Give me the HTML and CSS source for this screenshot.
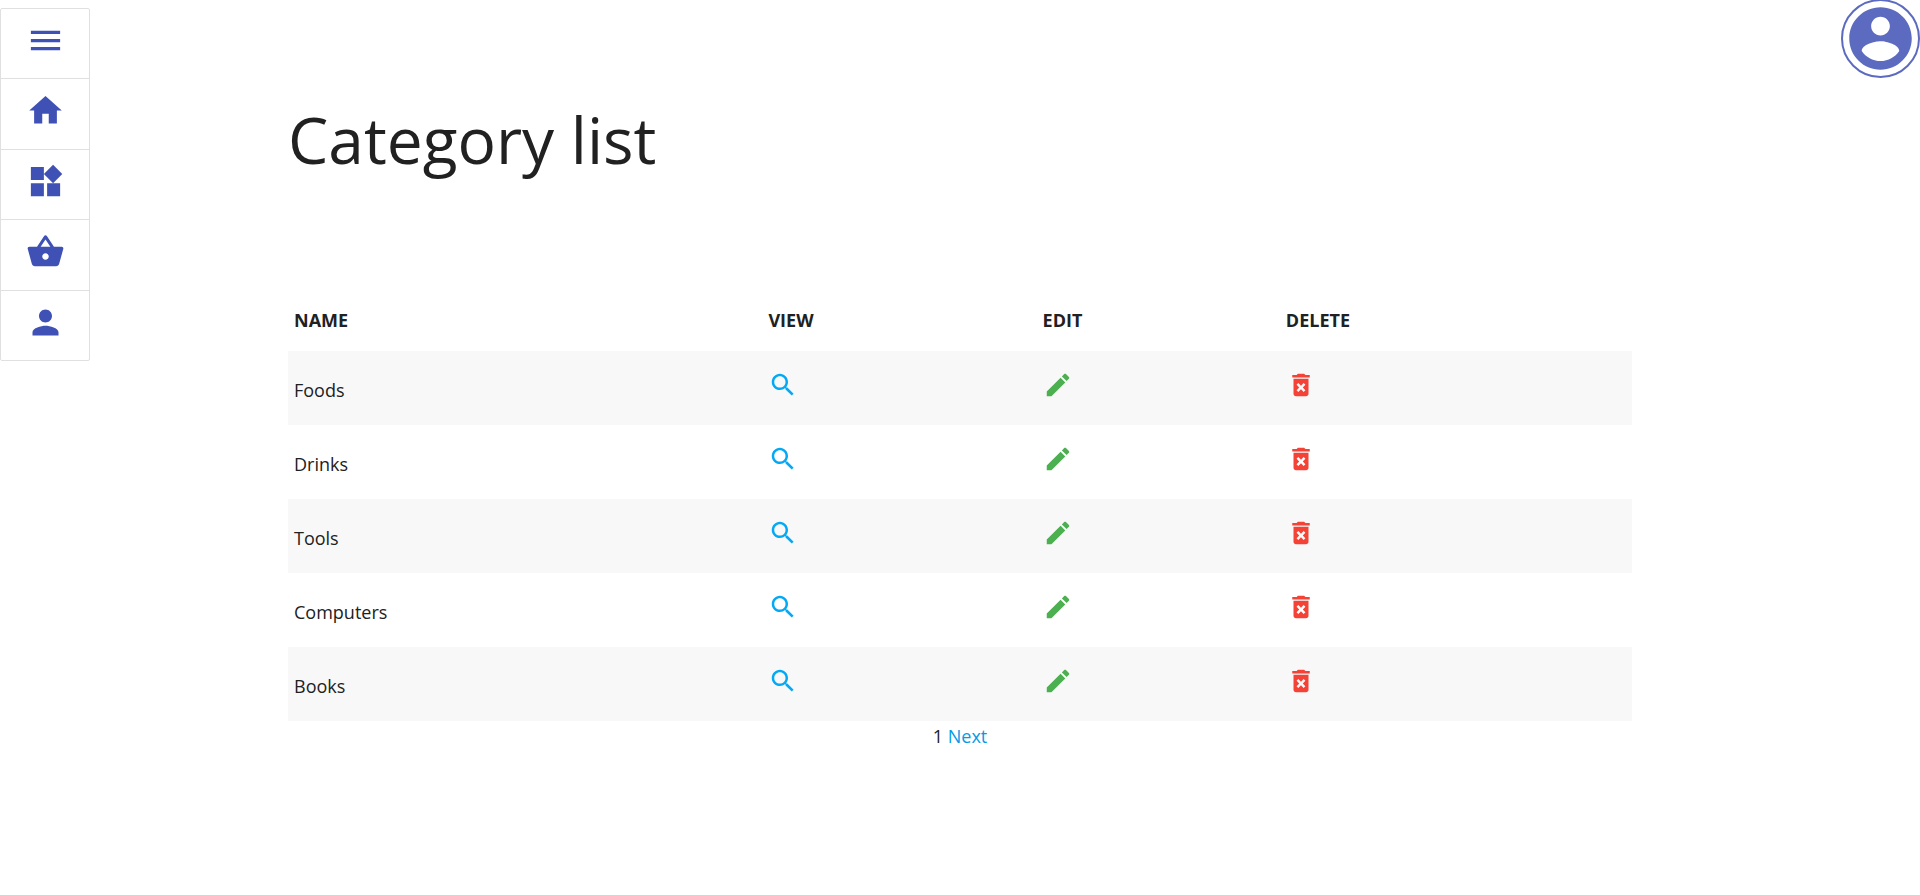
FILE: index.html
```html
<!DOCTYPE html>
<html lang="en">
<head>
<meta charset="utf-8">
<meta name="viewport" content="width=device-width, initial-scale=1">
<title>Category list</title>
<link rel="stylesheet" href="styles.css">
</head>
<body>
<svg class="sprite" aria-hidden="true">
  <symbol id="search" viewBox="0 0 24 24"><path d="M15.5 14h-.79l-.28-.27C15.41 12.59 16 11.11 16 9.5 16 5.91 13.09 3 9.5 3S3 5.91 3 9.5 5.91 16 9.5 16c1.61 0 3.09-.59 4.23-1.57l.27.28v.79l5 4.99L20.49 19l-4.99-5zm-6 0C7.01 14 5 11.99 5 9.5S7.01 5 9.5 5 14 7.01 14 9.5 11.99 14 9.5 14z"/></symbol>
  <symbol id="edit" viewBox="0 0 24 24"><path d="M3 17.25V21h3.75L17.81 9.94l-3.75-3.75L3 17.25zM20.71 7.04c.39-.39.39-1.02 0-1.41l-2.34-2.34c-.39-.39-1.02-.39-1.41 0l-1.83 1.83 3.75 3.75 1.83-1.83z"/></symbol>
  <symbol id="delete" viewBox="0 0 24 24"><path d="M6 19c0 1.1.9 2 2 2h8c1.1 0 2-.9 2-2V7H6v12zm2.46-7.12l1.41-1.41L12 12.59l2.12-2.12 1.41 1.41L13.41 14l2.12 2.12-1.41 1.41L12 15.41l-2.12 2.12-1.41-1.41L10.59 14l-2.13-2.12zM15.5 4l-1-1h-5l-1 1H5v2h14V4z"/></symbol>
</svg>

<nav class="sidebar" aria-label="Main">
  <a class="sidebar-item" href="#menu" aria-label="Menu"><svg class="icon-nav" viewBox="0 0 24 24"><path d="M3 18h18v-2H3v2zm0-5h18v-2H3v2zm0-7v2h18V6H3z"/></svg></a>
  <a class="sidebar-item" href="#home" aria-label="Home"><svg class="icon-nav" viewBox="0 0 24 24"><path d="M10 20v-6h4v6h5v-8h3L12 3 2 12h3v8z"/></svg></a>
  <a class="sidebar-item" href="#categories" aria-label="Categories"><svg class="icon-nav" viewBox="0 0 24 24"><path d="M13 13v8h8v-8h-8zM3 21h8v-8H3v8zM3 3v8h8V3H3zm13.66-1.31L11 7.34 16.66 13l5.66-5.66-5.66-5.65z"/></svg></a>
  <a class="sidebar-item" href="#products" aria-label="Products"><svg class="icon-nav" viewBox="0 0 24 24"><path d="M17.21 9l-4.38-6.56c-.19-.28-.51-.42-.83-.42-.32 0-.64.14-.83.43L6.79 9H2c-.55 0-1 .45-1 1 0 .09.01.18.04.27l2.54 9.27c.23.84 1 1.46 1.92 1.46h13c.92 0 1.69-.62 1.93-1.46l2.54-9.27L23 10c0-.55-.45-1-1-1h-4.79zM9 9l3-4.4L15 9H9zm3 8c-1.1 0-2-.9-2-2s.9-2 2-2 2 .9 2 2-.9 2-2 2z"/></svg></a>
  <a class="sidebar-item" href="#users" aria-label="Users"><svg class="icon-nav" viewBox="0 0 24 24"><path d="M12 12c2.21 0 4-1.79 4-4s-1.79-4-4-4-4 1.79-4 4 1.79 4 4 4zm0 2c-2.67 0-8 1.34-8 4v2h16v-2c0-2.66-5.33-4-8-4z"/></svg></a>
</nav>

<button class="account" type="button" aria-label="Account"><svg class="icon-account" viewBox="0 0 24 24"><path d="M12 2C6.48 2 2 6.48 2 12s4.48 10 10 10 10-4.48 10-10S17.52 2 12 2zm0 3c1.66 0 3 1.34 3 3s-1.34 3-3 3-3-1.34-3-3 1.34-3 3-3zm0 14.2c-2.5 0-4.71-1.28-6-3.22.03-1.99 4-3.08 6-3.08 1.99 0 5.97 1.09 6 3.08-1.29 1.94-3.5 3.22-6 3.22z"/></svg></button>

<main class="container">
  <h1 class="title">Category list</h1>
  <table class="categories">
    <colgroup><col class="col-name"><col class="col-view"><col class="col-edit"><col class="col-delete"></colgroup>
    <thead>
      <tr><th scope="col">NAME</th><th scope="col">VIEW</th><th scope="col">EDIT</th><th scope="col">DELETE</th></tr>
    </thead>
    <tbody>
      <tr><td>Foods</td><td><a class="action view" href="#view" aria-label="View Foods"><svg class="icon"><use href="#search"/></svg></a></td><td><a class="action edit" href="#edit-item" aria-label="Edit Foods"><svg class="icon"><use href="#edit"/></svg></a></td><td><a class="action delete" href="#delete-item" aria-label="Delete Foods"><svg class="icon"><use href="#delete"/></svg></a></td></tr>
      <tr><td>Drinks</td><td><a class="action view" href="#view" aria-label="View Drinks"><svg class="icon"><use href="#search"/></svg></a></td><td><a class="action edit" href="#edit-item" aria-label="Edit Drinks"><svg class="icon"><use href="#edit"/></svg></a></td><td><a class="action delete" href="#delete-item" aria-label="Delete Drinks"><svg class="icon"><use href="#delete"/></svg></a></td></tr>
      <tr><td>Tools</td><td><a class="action view" href="#view" aria-label="View Tools"><svg class="icon"><use href="#search"/></svg></a></td><td><a class="action edit" href="#edit-item" aria-label="Edit Tools"><svg class="icon"><use href="#edit"/></svg></a></td><td><a class="action delete" href="#delete-item" aria-label="Delete Tools"><svg class="icon"><use href="#delete"/></svg></a></td></tr>
      <tr><td>Computers</td><td><a class="action view" href="#view" aria-label="View Computers"><svg class="icon"><use href="#search"/></svg></a></td><td><a class="action edit" href="#edit-item" aria-label="Edit Computers"><svg class="icon"><use href="#edit"/></svg></a></td><td><a class="action delete" href="#delete-item" aria-label="Delete Computers"><svg class="icon"><use href="#delete"/></svg></a></td></tr>
      <tr><td>Books</td><td><a class="action view" href="#view" aria-label="View Books"><svg class="icon"><use href="#search"/></svg></a></td><td><a class="action edit" href="#edit-item" aria-label="Edit Books"><svg class="icon"><use href="#edit"/></svg></a></td><td><a class="action delete" href="#delete-item" aria-label="Delete Books"><svg class="icon"><use href="#delete"/></svg></a></td></tr>
    </tbody>
  </table>
  <div class="pagination"><span>1</span> <a class="next" href="#next">Next</a></div>
</main>
</body>
</html>
```

FILE: styles.css
```css
*, *::before, *::after { box-sizing: border-box; }

body {
  margin: 0;
  background: #fff;
  color: #212121;
  font-family: "Segoe UI", "Open Sans", "Noto Sans", sans-serif;
  font-size: 18px;
  line-height: 28px;
}

svg { display: block; fill: currentColor; }
.sprite { position: absolute; width: 0; height: 0; }

.sidebar {
  position: fixed;
  top: 8px;
  left: 0;
  display: flex;
  flex-direction: column;
  width: 90px;
  min-height: 353px;
  border: 1px solid #e0e0e0;
  border-radius: 2px;
  background: #fff;
}
.sidebar-item {
  flex: 1;
  display: flex;
  justify-content: center;
  padding-top: 12px;
  border-bottom: 1px solid #e0e0e0;
  color: #3f51b5;
}
.sidebar-item:last-child { border-bottom: 0; }
.icon-nav { width: 39px; height: 39px; }

.account {
  position: fixed;
  top: -1px;
  right: 0;
  padding: 0;
  border: 2px solid #5c6bc0;
  border-radius: 50%;
  background: transparent;
  color: #5c6bc0;
  cursor: pointer;
}
.icon-account { width: 75px; height: 75px; }

.container { width: 70%; margin: 0 auto; }

.title {
  margin: 0;
  padding: 102px 0 115px;
  font-size: 64px;
  font-weight: 400;
  line-height: 76px;
}

.categories {
  width: 100%;
  border-collapse: collapse;
  table-layout: fixed;
}
.col-name { width: 35.3%; }
.col-view { width: 20.4%; }
.col-edit { width: 18.1%; }
.categories th,
.categories td {
  text-align: left;
  vertical-align: middle;
}
.categories th { padding: 13px 6px 17px; font-weight: 700; }
.categories td { height: 74px; padding: 17px 6px 13px; }
.categories tbody tr:nth-child(odd) { background: #f8f8f8; }

.action { display: inline-block; vertical-align: top; padding-bottom: 10px; }
.icon { width: 30px; height: 30px; }
.view { color: #03a9f4; }
.edit { color: #4caf50; }
.delete { color: #f44336; }

.pagination { padding-top: 1px; text-align: center; }
.next { color: #039be5; text-decoration: none; }
```
